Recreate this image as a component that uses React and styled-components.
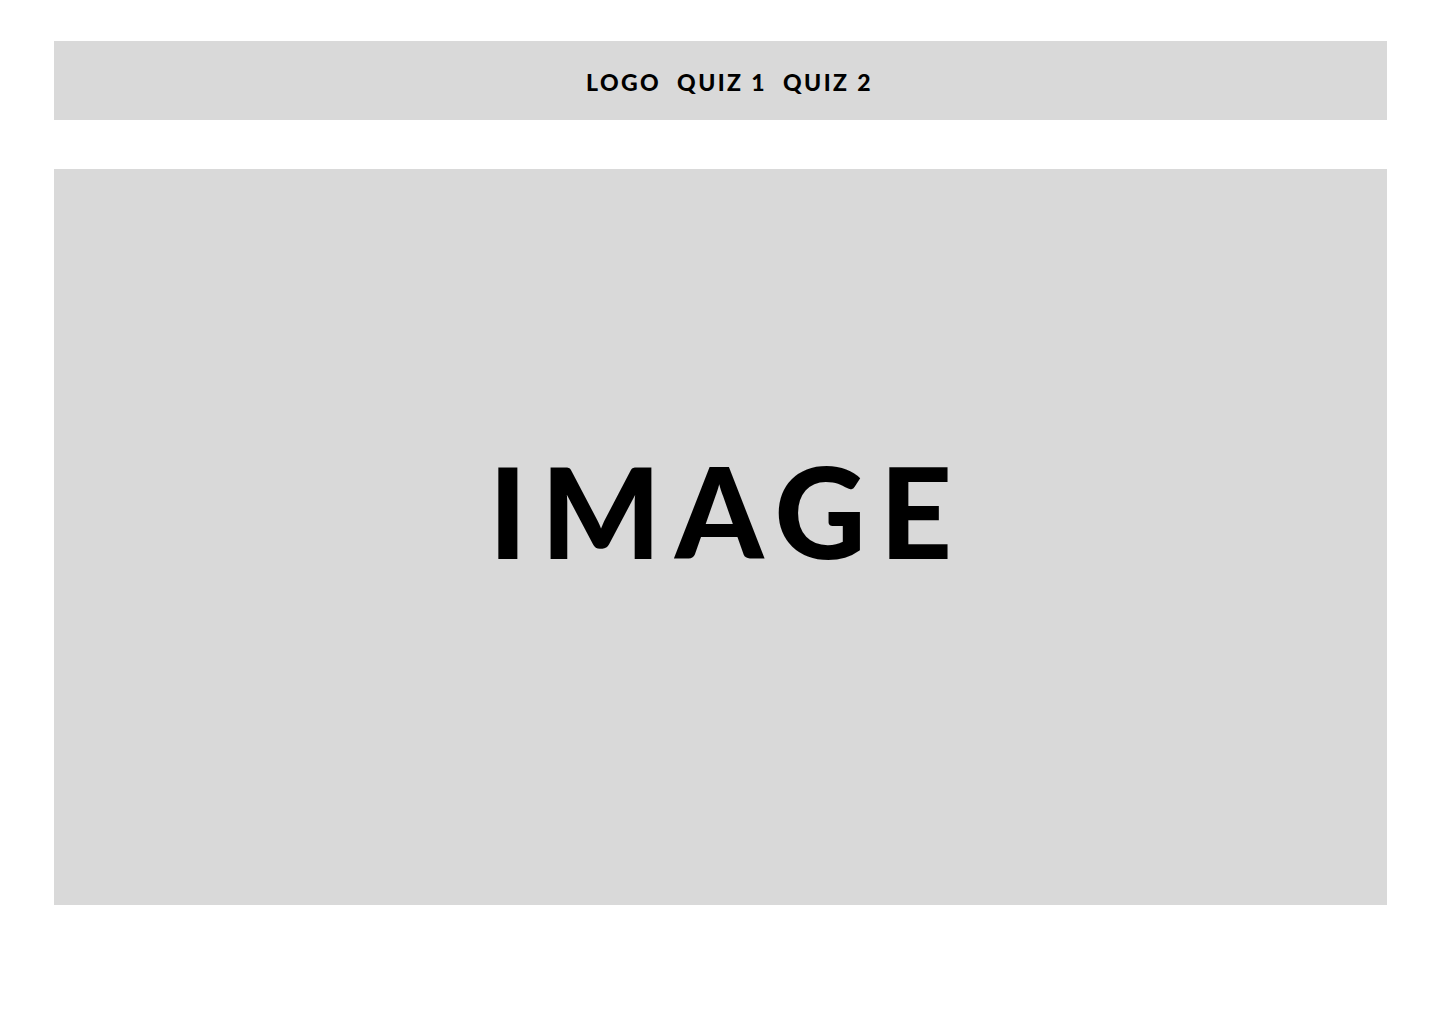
import React from "react";
import styled, { createGlobalStyle } from "styled-components";

const GlobalStyle = createGlobalStyle`
  body {
    margin: 0;
    background: #ffffff;
    font-family: "Lato", "Liberation Sans", sans-serif;
  }
`;

const Page = styled.div`
  padding: 41px 53px 0 54px;
  display: flex;
  flex-direction: column;
  gap: 49px;
`;

const NavBar = styled.nav`
  height: 79px;
  background: #d9d9d9;
  display: flex;
  justify-content: center;
  align-items: center;
  gap: 16px;
  padding: 3px 0 0 18px;
  box-sizing: border-box;
`;

const NavItem = styled.span`
  font-weight: 900;
  font-size: 23px;
  letter-spacing: 2.4px;
  color: #000;
`;

const Hero = styled.div`
  height: 736px;
  background: #d9d9d9;
  display: flex;
  justify-content: center;
  align-items: center;
  padding-bottom: 54px;
  box-sizing: border-box;
`;

const HeroText = styled.h1`
  margin: 0;
  font-weight: 900;
  font-size: 126px;
  letter-spacing: 14px;
  color: #000;
  padding-left: 14px;
`;

const App = () => {
  return (
    <>
      <GlobalStyle />
      <Page>
        <NavBar>
          <NavItem>LOGO</NavItem>
          <NavItem>QUIZ 1</NavItem>
          <NavItem>QUIZ 2</NavItem>
        </NavBar>
        <Hero>
          <HeroText>IMAGE</HeroText>
        </Hero>
      </Page>
    </>
  );
};

export default App;
